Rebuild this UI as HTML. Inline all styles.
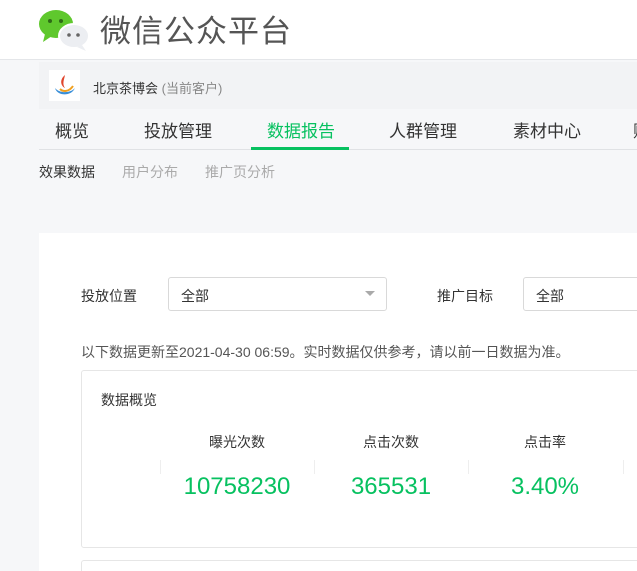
<!DOCTYPE html>
<html><head><meta charset="utf-8"><style>
*{margin:0;padding:0;box-sizing:border-box}
html,body{width:637px;height:571px;overflow:hidden}
body{background:#f6f7f9;font-family:"Liberation Sans","Noto Sans CJK SC",sans-serif;position:relative;color:#333}
.a{position:absolute;white-space:nowrap}
</style></head><body>
<div class="a" style="left:0;top:0;width:637px;height:60px;background:#fff;border-bottom:1px solid #e4e6e9"></div>
<svg class="a" style="left:37px;top:7px" width="56" height="44" viewBox="0 0 56 44">
<ellipse cx="19" cy="17" rx="17" ry="14" fill="#5fc82d"/><path d="M8 27 L6 35 L15 29Z" fill="#5fc82d"/>
<circle cx="13" cy="14" r="2" fill="#2e6b16"/><circle cx="24" cy="14" r="2" fill="#2e6b16"/>
<ellipse cx="37" cy="29" rx="15" ry="12" fill="#eceef2" stroke="#fff" stroke-width="2"/><path d="M45 38 L49 44 L40 40Z" fill="#eceef2"/>
<circle cx="32" cy="28" r="1.8" fill="#666"/><circle cx="41" cy="28" r="1.8" fill="#666"/></svg>
<div class="a" style="left:100px;top:6px;font-size:31px;color:#555;letter-spacing:1px">微信公众平台</div>
<div class="a" style="left:39px;top:62px;width:598px;height:47px;background:#f2f3f5"></div>
<div class="a" style="left:49px;top:70px;width:31px;height:31px;background:#fff"></div>
<svg class="a" style="left:51px;top:72px" width="27" height="27" viewBox="0 0 27 27"><path d="M14 3 C8 8 10 14 14 16 C11 12 13 8 14 3Z" fill="#e0452c"/><path d="M4 16 C6 24 20 25 24 16 C20 21 9 22 4 16Z" fill="#3a8fd8"/><path d="M9 17 C12 20 18 20 22 14" stroke="#f0a020" stroke-width="2" fill="none"/></svg>
<div class="a" style="left:93px;top:78px;font-size:13px;color:#333">北京茶博会 <span style="color:#888">(当前客户)</span></div>
<div class="a" style="left:39px;top:149px;width:598px;height:1px;background:#e0e2e5"></div>
<div class="a" style="left:55px;top:117px;font-size:17px;color:#333">概览</div>
<div class="a" style="left:144px;top:117px;font-size:17px;color:#333">投放管理</div>
<div class="a" style="left:267px;top:117px;font-size:17px;color:#07c160">数据报告</div>
<div class="a" style="left:251px;top:147px;width:98px;height:3px;background:#07c160"></div>
<div class="a" style="left:389px;top:117px;font-size:17px;color:#333">人群管理</div>
<div class="a" style="left:513px;top:117px;font-size:17px;color:#333">素材中心</div>
<div class="a" style="left:633px;top:117px;font-size:17px;color:#333">账</div>
<div class="a" style="left:39px;top:162px;font-size:14px;color:#333">效果数据</div>
<div class="a" style="left:122px;top:162px;font-size:14px;color:#aaa">用户分布</div>
<div class="a" style="left:205px;top:162px;font-size:14px;color:#aaa">推广页分析</div>
<div class="a" style="left:39px;top:233px;width:598px;height:338px;background:#fff"></div>
<div class="a" style="left:81px;top:286px;font-size:14px;color:#333">投放位置</div>
<div class="a" style="left:168px;top:277px;width:219px;height:34px;border:1px solid #d9d9d9;border-radius:3px"></div>
<div class="a" style="left:181px;top:286px;font-size:14px;color:#333">全部</div>
<div class="a" style="left:365px;top:291px;width:0;height:0;border-left:5px solid transparent;border-right:5px solid transparent;border-top:5px solid #aaa"></div>
<div class="a" style="left:437px;top:286px;font-size:14px;color:#333">推广目标</div>
<div class="a" style="left:523px;top:277px;width:130px;height:34px;border:1px solid #d9d9d9;border-radius:3px"></div>
<div class="a" style="left:536px;top:286px;font-size:14px;color:#333">全部</div>
<div class="a" style="left:81px;top:342px;font-size:14px;color:#555">以下数据更新至2021-04-30 06:59。实时数据仅供参考，请以前一日数据为准。</div>
<div class="a" style="left:81px;top:370px;width:570px;height:178px;border:1px solid #e6e6e6;border-radius:3px"></div>
<div class="a" style="left:101px;top:390px;font-size:14px;color:#333">数据概览</div>
<div class="a" style="left:160px;top:460px;width:1px;height:14px;background:#eee"></div>
<div class="a" style="left:314px;top:460px;width:1px;height:14px;background:#eee"></div>
<div class="a" style="left:468px;top:460px;width:1px;height:14px;background:#eee"></div>
<div class="a" style="left:623px;top:460px;width:1px;height:14px;background:#eee"></div>
<div class="a" style="left:160px;top:432px;width:154px;text-align:center;font-size:14px;color:#333">曝光次数</div>
<div class="a" style="left:314px;top:432px;width:154px;text-align:center;font-size:14px;color:#333">点击次数</div>
<div class="a" style="left:468px;top:432px;width:154px;text-align:center;font-size:14px;color:#333">点击率</div>
<div class="a" style="left:160px;top:473px;width:154px;text-align:center;font-size:24px;color:#07c160">10758230</div>
<div class="a" style="left:314px;top:473px;width:154px;text-align:center;font-size:24px;color:#07c160">365531</div>
<div class="a" style="left:468px;top:473px;width:154px;text-align:center;font-size:24px;color:#07c160">3.40%</div>
<div class="a" style="left:81px;top:560px;width:570px;height:20px;border:1px solid #e6e6e6;border-radius:3px"></div>
</body></html>
